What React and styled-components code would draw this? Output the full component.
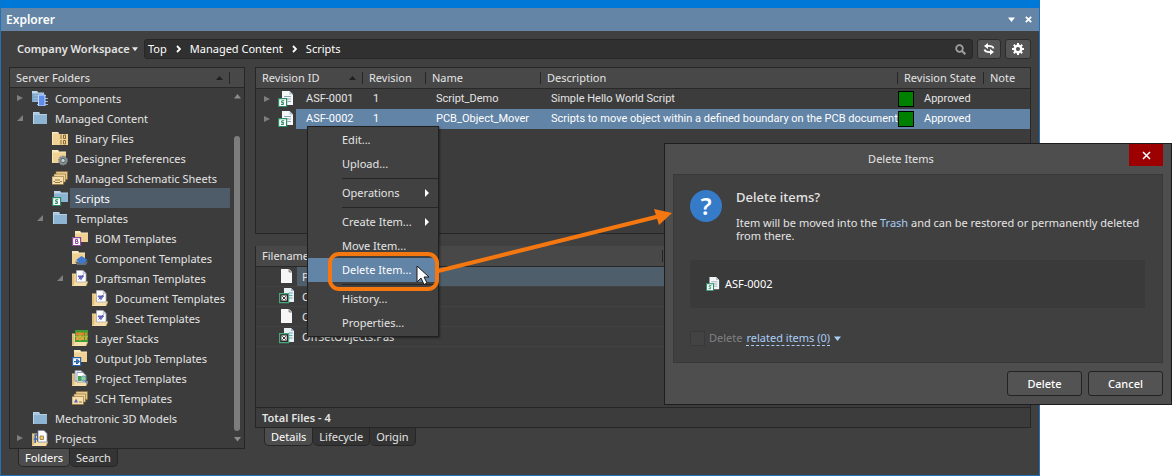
import React, { useState } from "react";
import styled, { createGlobalStyle, css } from "styled-components";

const GlobalStyle = createGlobalStyle`
	* {
		box-sizing: border-box;
	}
	body {
		margin: 0;
		background-color: #ffffff;
		font-family: "Noto Sans", "Open Sans", sans-serif;
		font-size: 11px;
		line-height: 20px;
		color: #e4e4e4;
	}
	button,
	input,
	select {
		font: inherit;
		color: inherit;
		margin: 0;
		padding: 0;
		border: 0;
		background: none;
	}
	a {
		color: inherit;
		text-decoration: none;
	}
	svg {
		display: block;
		flex: none;
	}
`;

const Page = styled.div`
	position: relative;
`;

const Window = styled.main`
	margin-right: 132px;
	border: 1px solid #2172b8;
	border-top: 8px solid #0078d7;
	background-color: #404040;
`;

const TitleBar = styled.header`
	display: flex;
	align-items: center;
	gap: 8px;
	height: 23px;
	padding: 0 6px 0 5px;
	background-color: #6485a5;
	color: #ffffff;
	h1 {
		flex: 1;
		margin: 0;
		font-size: 12px;
		font-weight: 600;
	}
`;

const TitleButton = styled.button`
	display: flex;
	align-items: center;
	justify-content: center;
	width: 9px;
	height: 16px;
`;

const Toolbar = styled.div`
	display: flex;
	align-items: center;
	gap: 4px;
	padding: 8px 8px 8px 16px;
`;

const Workspace = styled.label`
	display: flex;
	align-items: center;
	gap: 2px;
	margin-right: 2px;
	select {
		appearance: none;
		font-weight: 600;
	}
`;

const AddressBar = styled.div`
	display: flex;
	flex: 1;
	align-items: center;
	height: 20px;
	padding: 0 6px 0 3px;
	border: 1px solid #272727;
	border-radius: 3px;
	background-color: #303030;
	color: #ffffff;
	input {
		flex: 1;
		min-width: 0;
		height: 16px;
		outline: none;
	}
`;

const Crumb = styled.a`
	display: flex;
	align-items: center;
	gap: 9px;
	margin-right: 9px;
	white-space: nowrap;
`;

const ToolButton = styled.button`
	display: flex;
	align-items: center;
	justify-content: center;
	width: ${(props) => props.$width}px;
	height: 20px;
	border: 1px solid #2c2c2c;
	border-radius: 3px;
	background-color: #555555;
`;

const Body = styled.div`
	display: flex;
	gap: 10px;
	padding: 0 8px 8px;
`;

const Sidebar = styled.section`
	flex: none;
	width: 236px;
`;

const Content = styled.section`
	flex: 1;
	min-width: 0;
`;

const Panel = styled.div`
	border: 1px solid #262626;
	border-top-width: ${(props) => (props.$openTop ? 0 : 1)}px;
	background-color: #3c3c3c;
	min-height: ${(props) => props.$minHeight || 0}px;
	margin-bottom: ${(props) => props.$gap || 0}px;
`;

const SidebarHeader = styled.div`
	display: flex;
	align-items: center;
	height: 20px;
	padding: 0 14px 0 6px;
	border-bottom: 1px solid #282828;
	background-color: #484848;
	h2 {
		flex: 1;
		margin: 0;
		font-size: 11px;
		font-weight: 400;
	}
`;

const Divider = styled.span`
	width: 1px;
	height: 12px;
	margin-left: 6px;
	background-color: #262626;
`;

const TreeArea = styled.div`
	display: flex;
`;

const Tree = styled.ul`
	flex: 1;
	margin: 0;
	padding: 0;
	list-style: none;
`;

const TreeRow = styled.li`
	display: flex;
	align-items: center;
	height: 20px;
	padding-left: ${(props) => props.$level * 20 + 6}px;
`;

const TreeToggle = styled.span`
	flex: none;
	width: 16px;
`;

const TreeLabel = styled.button`
	flex: 1;
	height: 20px;
	margin-left: 2px;
	padding: 2px 0 0 5px;
	line-height: 18px;
	text-align: left;
	white-space: nowrap;
	background-color: ${(props) => (props.$selected ? "#4e5c6a" : "transparent")};
	color: ${(props) => (props.$selected ? "#ffffff" : "inherit")};
`;

const ScrollBar = styled.div`
	display: flex;
	flex-direction: column;
	align-items: center;
	gap: 1px;
	width: 14px;
	padding: 6px 0;
`;

const ScrollTrack = styled.div`
	display: flex;
	flex: 1;
	width: 6px;
	padding: 36px 0 5px;
`;

const ScrollThumb = styled.div`
	flex: 1;
	border-radius: 3px;
	background-color: #7d7d7d;
`;

const Tabs = styled.div`
	display: flex;
	padding-left: 9px;
`;

const Tab = styled.button`
	height: 18px;
	padding: 0 6px;
	border: 1px solid #262626;
	border-top: 0;
	border-left-width: ${(props) => (props.$active ? 1 : 0)}px;
	border-radius: 0 0 5px 5px;
	line-height: 16px;
	background-color: ${(props) => (props.$active ? "#4d4d4d" : "#343434")};
	color: ${(props) => (props.$active ? "#ffffff" : "#e4e4e4")};
`;

const Table = styled.table`
	width: 100%;
	table-layout: fixed;
	border-collapse: collapse;
	th,
	td {
		padding: 0;
		text-align: left;
		font-weight: 400;
		white-space: nowrap;
	}
`;

const HeadCell = styled.th`
	height: 20px;
	border-bottom: 1px solid #282828;
	background-color: #484848;
	div {
		display: flex;
		align-items: center;
		height: 19px;
		padding-left: 6px;
	}
	span:first-child {
		flex: 1;
	}
`;

const rowText = css`
	height: 20px;
	font-family: "Roboto", "Liberation Sans", sans-serif;
	font-size: 11px;
`;

const RevisionRow = styled.tr`
	${rowText}
	color: ${(props) => (props.$selected ? "#ffffff" : "inherit")};
	td:not(:first-child),
	td:first-child span {
		background-color: ${(props) => (props.$selected ? "#6284a6" : "transparent")};
	}
	td:not(:first-child) {
		padding-left: 10px;
	}
	td:nth-child(5) {
		padding-left: 0;
	}
`;

const IdCell = styled.div`
	display: flex;
	align-items: center;
	height: 20px;
	padding-left: 7px;
	svg:nth-child(2) {
		margin: 0 2px 0 7px;
	}
	span {
		flex: 1;
		height: 20px;
		padding-left: 10px;
	}
`;

const State = styled.div`
	display: flex;
	align-items: center;
	gap: 10px;
	&::before {
		content: "";
		width: 14px;
		height: 14px;
		border: 1px solid #000000;
		background-color: #008000;
	}
`;

const FileRow = styled.tr`
	border-bottom: 1px solid #424242;
	td {
		height: 20px;
	}
`;

const FileCell = styled.div`
	display: flex;
	align-items: center;
	height: 19px;
	padding-left: 23px;
	gap: 2px;
	span {
		flex: 1;
		height: 19px;
		padding-left: 5px;
		line-height: 19px;
		background-color: ${(props) => (props.$selected ? "#4f5e6b" : "transparent")};
	}
`;

const FileRest = styled.td`
	background-color: ${(props) => (props.$selected ? "#4f5e6b" : "transparent")};
`;

const FilesBody = styled.div`
	min-height: 161px;
`;

const Total = styled.footer`
	height: 20px;
	padding-left: 6px;
	border-top: 1px solid #262626;
	line-height: 20px;
	font-weight: 600;
`;

const Menu = styled.div`
	position: absolute;
	left: 307px;
	top: 126px;
	width: 132px;
	padding: 1px 0;
	border: 1px solid #202020;
	background-color: #414141;
	box-shadow: 1px 1px 2px rgba(0, 0, 0, 0.4);
	hr {
		height: 1px;
		margin: 2px 0 2px 34px;
		border: 0;
		background-color: #262626;
	}
`;

const MenuItem = styled.button`
	display: flex;
	align-items: center;
	justify-content: space-between;
	width: 100%;
	height: 24px;
	padding: 0 9px 0 34px;
	background-color: ${(props) => (props.$active ? "#6284a6" : "transparent")};
	color: ${(props) => (props.$active ? "#ffffff" : "inherit")};
`;

const Callout = styled.svg`
	position: absolute;
	left: 320px;
	top: 200px;
	pointer-events: none;
`;

const Dialog = styled.div`
	position: absolute;
	left: 664px;
	right: 0;
	top: 143px;
	padding: 0 8px 8px;
	border: 1px solid #1e1e1e;
	background-color: #4e4e4e;
`;

const DialogTitle = styled.header`
	display: flex;
	height: 30px;
	h2 {
		flex: 1;
		margin: 0;
		text-align: center;
		font-size: 11px;
		font-weight: 400;
		line-height: 30px;
	}
`;

const CloseButton = styled.button`
	display: flex;
	align-items: center;
	justify-content: center;
	width: 34px;
	height: 22px;
	background-color: #9c0000;
`;

const DialogBody = styled.div`
	padding: 12px 17px 14px 16px;
	border: 1px solid #383838;
	background-color: #404040;
`;

const Message = styled.div`
	display: flex;
	gap: 14px;
	padding-bottom: 18px;
	h3 {
		margin: 0 0 9px;
		font-size: 13px;
		font-weight: 500;
		line-height: 20px;
	}
	p {
		margin: 0;
		line-height: 13px;
	}
	a {
		color: #a9cdf5;
	}
`;

const QuestionBadge = styled.span`
	display: flex;
	flex: none;
	align-items: center;
	justify-content: center;
	width: 32px;
	height: 32px;
	margin-top: 3px;
	border-radius: 50%;
	background-color: #357bc8;
	font-size: 24px;
	font-weight: 600;
	color: #ffffff;
`;

const ItemBox = styled.div`
	display: flex;
	align-items: center;
	gap: 5px;
	height: 48px;
	padding-left: 16px;
	background-color: #3a3a3a;
	color: #ffffff;
`;

const Related = styled.div`
	display: flex;
	align-items: center;
	gap: 4px;
	margin-top: 20px;
	color: #808080;
	input {
		appearance: none;
		width: 15px;
		height: 15px;
		border: 1px solid #393939;
		background-color: #434343;
	}
	a {
		border-bottom: 1px dashed #a9cdf5;
		line-height: 15px;
		color: #a9cdf5;
	}
`;

const DialogActions = styled.div`
	display: flex;
	justify-content: flex-end;
	gap: 6px;
	padding-top: 8px;
`;

const ActionButton = styled.button`
	width: 75px;
	height: 25px;
	border: 1px solid #222222;
	border-radius: 3px;
	background-color: #535353;
	font-weight: 500;
	color: #ffffff;
`;

/**
 * Small glyphs
 */
const Caret = ({ size = 7, color = "#e4e4e4" }) => (
    <svg width={size} height={size} viewBox="0 0 7 7">
        <path d="M0 1.500h7L3.500 6z" fill={color} />
    </svg>
);

const ScrollArrow = ({ up }) => (
    <svg width="7" height="5" viewBox="0 0 7 5">
        <path d={up ? "M0 4.500h7L3.500 0z" : "M0 0h7L3.500 4.500z"} fill="#8c8c8c" />
    </svg>
);

const SortArrow = () => (
    <svg width="7" height="4" viewBox="0 0 7 4">
        <path d="M0 4h7L3.500 0z" fill="#202020" />
    </svg>
);

const Collapsed = () => (
    <svg width="8" height="8" viewBox="0 0 8 8">
        <path d="M1 1v6l6-3z" fill="#7e7e7e" />
    </svg>
);

const Expanded = () => (
    <svg width="8" height="8" viewBox="0 0 8 8">
        <path d="M7 1v6H1z" fill="#7e7e7e" />
    </svg>
);

const Chevron = () => (
    <svg width="5" height="8" viewBox="0 0 5 8">
        <path d="M1 1l3 3-3 3" fill="none" stroke="#ffffff" strokeWidth="1.800" />
    </svg>
);

/**
 * Folder artwork
 */
const YELLOW = "#f0d294";
const BLUE = "#8db5d3";

const FolderShape = ({ fill, tab }) => (
    <>
        <path d="M1 2h6l1 2h7v10H1z" fill={fill} />
        <path d="M1 2h6l1 1.500H2V14H1z" fill={tab} />
        <path d="M2 4.500h13" stroke={tab} strokeWidth=".8" />
    </>
);

const OpenFolder = () => (
    <>
        <path d="M0 3.500h5V12l-3 4H0z" fill="#f0d294" />
        <path d="M1 15V4.500" stroke="#c79f58" strokeWidth=".8" />
        <path d="M1 16l3-4.500h12L14 16z" fill="#f6dfaa" />
        <path d="M14 16l2-4.500" stroke="#c79f58" strokeWidth=".8" />
    </>
);

const Stack = () => (
    <>
        <path d="M4 1.500h11.500v8H4z" fill="#e7c98a" stroke="#8a6a35" strokeWidth=".6" />
        <path d="M2 4h11.500v8H2z" fill="#efd298" stroke="#8a6a35" strokeWidth=".6" />
        <path d="M0 6.500h11.500v8H0z" fill="#f6dfaa" stroke="#8a6a35" strokeWidth=".6" />
    </>
);

const Badge = ({ color, children }) => (
    <>
        <path d="M.6 7.600h8v8h-8z" fill="#ffffff" stroke={color} strokeWidth="1.200" />
        {children}
    </>
);

const S_PATH = "M6.200 9.800H4L3.500 11l2 .9L5.200 13.400H3";

const ICONS = {
    folder: <FolderShape fill={BLUE} tab="#bcd6e8" />,
    components: (
        <>
            <path d="M0 1h5l1 2h6v9H0z" fill="#7fa9cc" />
            <path d="M0 1h5l1 1.500h6v1H0z" fill="#c0d8ea" />
            <path d="M2 5h12v1H2zM2 8h14v1H2zM2 11h14v1H2zM5 14h11v1H5z" fill="#9bb5dc" />
            <path d="M6.500 5h6.500v11H6.500z" fill="#5f8eea" stroke="#c6d8ff" strokeWidth="1" />
        </>
    ),
    binary: (
        <>
            <path d="M0 2h6l1 2h9v11H0z" fill={YELLOW} />
            <path d="M0 2h6l1 1.500H1V15H0z" fill="#fae9bd" />
            <path
                d="M9 4.500V9M9 10v4.500M11.500 5h2v3.500h-2zM11.500 10.500h2V14h-2z"
                fill="none"
                stroke="#8a6a35"
                strokeWidth="1"
            />
        </>
    ),
    preferences: (
        <>
            <path d="M0 0h6l1 2h7v11H0z" fill={YELLOW} />
            <path d="M0 0h6l1 1.500h7v1H1V13H0z" fill="#fae9bd" />
            <circle cx="11" cy="10.500" r="4.200" fill="#8c9698" stroke="#7b888b" strokeDasharray="1.600 1" strokeWidth="1.500" />
            <circle cx="11" cy="10.500" r="2.200" fill="#c3cdcf" stroke="#4b5a5d" strokeWidth=".9" />
        </>
    ),
    sheets: (
        <>
            <Stack />
            <path d="M3 10h5M3 12.500h5M1.500 11.500h1.500M8 11.500h2" stroke="#8a6a35" strokeWidth=".9" />
        </>
    ),
    scriptFolder: (
        <>
            <path d="M2 1h6l1 2h7v9H2z" fill={BLUE} />
            <path d="M2 1h6l1 1.500h7v1H2z" fill="#bcd6e8" />
            <Badge color="#2c8c66">
                <path d={S_PATH} fill="none" stroke="#2c8c66" strokeWidth="1.100" />
            </Badge>
        </>
    ),
    bom: (
        <>
            <path d="M3 1h5l1 2h7v9H3z" fill={YELLOW} />
            <path d="M3 1h5l1 1.500h7v1H3z" fill="#fae9bd" />
            <Badge color="#8f479c">
                <path d="M3.500 9.500h2v1.800h-2zM3.500 11.500h2.500v2h-2.500z" fill="none" stroke="#8f479c" strokeWidth="1" />
            </Badge>
        </>
    ),
    componentFolder: (
        <>
            <path d="M0 1h6l1 2h6v11H0z" fill={YELLOW} />
            <path d="M0 1h6l1 1.500h6v1H0z" fill="#fae9bd" />
            <path d="M3 11.500h13l-2 3.500H5z" fill="#606e7c" />
            <path d="M4 10l5.500-4 6 4-5.500 4z" fill="#3f78cf" />
        </>
    ),
    draftsman: (
        <>
            <OpenFolder />
            <path d="M4.500 .5h6.500l3 3V12H4.500z" fill="#ffffff" stroke="#a9a9bd" strokeWidth=".8" />
            <path d="M11 .5v3h3" fill="#dcdcea" stroke="#a9a9bd" strokeWidth=".6" />
            <path d="M5.500 6h6.500l-3 4.500z" fill="#7474c4" />
            <path d="M6 6h6M6.500 9.500l5-5" stroke="#5050a8" strokeWidth=".9" />
        </>
    ),
    layers: (
        <>
            <OpenFolder />
            <path d="M3 0h13v12H3z" fill="#3f9c35" />
            <path d="M4 2.500h3.500v3H4zM8.500 2.500H12v3H8.500zM13 2.500h2v3h-2z" fill="#ef7d2c" />
            <path d="M4 7h3.500v3H4zM8.500 7H12v3H8.500zM13 7h2v3h-2z" fill="#e8a03a" />
            <path d="M3 6.300h13M8 2v9" stroke="#e8d24a" strokeWidth=".7" />
        </>
    ),
    output: (
        <>
            <path d="M2 0h6l1 2h6v10H2z" fill={YELLOW} />
            <path d="M2 0h6l1 1.500h6v1H2z" fill="#fae9bd" />
            <Badge color="#2b63ad">
                <path d="M2 11.600h5M4.600 9.300v4.600M5.200 9.500l2 2.100-2 2.100" fill="none" stroke="#2b63ad" strokeWidth="1.200" />
            </Badge>
        </>
    ),
    project: (
        <>
            <OpenFolder />
            <path d="M3 .5h6l2 2V11H3z" fill="#e9edf5" stroke="#8189a8" strokeWidth=".8" />
            <path d="M5 2.500h6l3 3V12H5z" fill="#ffffff" stroke="#8189a8" strokeWidth=".8" />
            <path d="M6 6h3v5H6z" fill="#3fa34c" />
            <circle cx="11.500" cy="8.500" r="2.600" fill="#8fd0a0" stroke="#4c8d9d" strokeWidth=".9" />
            <path d="M13 10.500l2.500 3" stroke="#5a82b8" strokeWidth="1.500" />
        </>
    ),
    sch: (
        <>
            <Stack />
            <path d="M2 12.500l2-4 2 4z" fill="#5a62b8" />
            <path d="M7 12h3" stroke="#8a6a35" strokeWidth=".9" />
        </>
    ),
    projects: (
        <>
            <OpenFolder />
            <path d="M6 .5h6l3 3V12H6z" fill="#ffffff" stroke="#8189a8" strokeWidth=".8" />
            <path d="M8 6h3.500v3.500H8z" fill="#eccb6c" stroke="#96743a" strokeWidth=".8" />
            <path d="M5.500 5H3.200v8M1.800 9h4" fill="none" stroke="#3a69b5" strokeWidth="1.500" />
        </>
    ),
    script: (
        <>
            <path d="M4 0h7.500L15 3.500V14H4z" fill="#f4f7f7" />
            <path d="M11.500 0v3.500H15" fill="#b7c4cc" />
            <path d="M6 5.500h7M8 8h5M9.500 10.500h3.500" stroke="#8ea7b5" strokeWidth="1" />
            <Badge color="#2c8c66">
                <path d={S_PATH} fill="none" stroke="#2c8c66" strokeWidth="1.100" />
            </Badge>
        </>
    ),
    page: (
        <>
            <path d="M2 1h8l3 3v11H2z" fill="#f6f6f6" />
            <path d="M10 1v3h3" fill="#cccccc" stroke="#707070" strokeWidth=".8" />
        </>
    ),
    form: (
        <>
            <path d="M5 0h7l3 3v11H5z" fill="#e6f0f3" />
            <path d="M12 0v3h3" fill="#a4b8c2" />
            <path d="M10 5h3.500M10 7.500h3.500M10 10h3.500" stroke="#74a3b8" strokeWidth="1" />
            <path d="M.6 5.600h9v9h-9z" fill="#2b2b2b" stroke="#4aa67c" strokeWidth="1.200" />
            <path d="M2.500 7.500h5.200v5H2.500z" fill="#ffffff" />
            <path d="M3.300 8.300l3.600 3.400M6.900 8.300l-3.600 3.400" stroke="#2b2b2b" strokeWidth="1" />
        </>
    ),
};

const Icon = ({ name, size = 16 }) => (
    <svg width={size} height={size} viewBox="0 0 16 16">
        {ICONS[name]}
    </svg>
);

/**
 * Data
 */
const folders = [
    { label: "Components", icon: "components", level: 0, toggle: "closed" },
    { label: "Managed Content", icon: "folder", level: 0, toggle: "open" },
    { label: "Binary Files", icon: "binary", level: 1 },
    { label: "Designer Preferences", icon: "preferences", level: 1 },
    { label: "Managed Schematic Sheets", icon: "sheets", level: 1 },
    { label: "Scripts", icon: "scriptFolder", level: 1 },
    { label: "Templates", icon: "folder", level: 1, toggle: "open" },
    { label: "BOM Templates", icon: "bom", level: 2 },
    { label: "Component Templates", icon: "componentFolder", level: 2 },
    { label: "Draftsman Templates", icon: "draftsman", level: 2, toggle: "open" },
    { label: "Document Templates", icon: "draftsman", level: 3 },
    { label: "Sheet Templates", icon: "draftsman", level: 3 },
    { label: "Layer Stacks", icon: "layers", level: 2 },
    { label: "Output Job Templates", icon: "output", level: 2 },
    { label: "Project Templates", icon: "project", level: 2 },
    { label: "SCH Templates", icon: "sch", level: 2 },
    { label: "Mechatronic 3D Models", icon: "folder", level: 0 },
    { label: "Projects", icon: "projects", level: 0, toggle: "closed" },
];

const columns = [
    { label: "Revision ID", width: 107, sorted: true },
    { label: "Revision", width: 63 },
    { label: "Name", width: 115 },
    { label: "Description" },
    { label: "Revision State", width: 86 },
    { label: "Note", width: 46, last: true },
];

const revisions = [
    {
        id: "ASF-0001",
        revision: "1",
        name: "Script_Demo",
        description: "Simple Hello World Script",
        state: "Approved",
    },
    {
        id: "ASF-0002",
        revision: "1",
        name: "PCB_Object_Mover",
        description: "Scripts to move object within a defined boundary on the PCB document",
        state: "Approved",
        selected: true,
    },
];

const files = [
    { name: "PCB_Object.PrjScr", icon: "page", selected: true },
    { name: "OffSetForm.Pas", icon: "form" },
    { name: "OffSetForm.dfm", icon: "page" },
    { name: "OffSetObjects.Pas", icon: "form" },
];

const menuItems = [
    { label: "Edit..." },
    { label: "Upload..." },
    null,
    { label: "Operations", submenu: true },
    null,
    { label: "Create Item...", submenu: true },
    { label: "Move Item..." },
    { label: "Delete Item...", active: true },
    null,
    { label: "History..." },
    { label: "Properties..." },
];

function FolderTree() {
    const [selected, setSelected] = useState("Scripts");
    return (
        <Sidebar>
            <Panel>
                <SidebarHeader>
                    <h2>Server Folders</h2>
                    <SortArrow />
                    <Divider />
                </SidebarHeader>
                <TreeArea>
                    <Tree>
                        {folders.map(({ label, icon, level, toggle }) => (
                            <TreeRow key={label} $level={level}>
                                <TreeToggle>
                                    {toggle === "closed" && <Collapsed />}
                                    {toggle === "open" && <Expanded />}
                                </TreeToggle>
                                <Icon name={icon} />
                                <TreeLabel $selected={selected === label} onClick={() => setSelected(label)}>
                                    {label}
                                </TreeLabel>
                            </TreeRow>
                        ))}
                    </Tree>
                    <ScrollBar>
                        <ScrollArrow up />
                        <ScrollTrack>
                            <ScrollThumb />
                        </ScrollTrack>
                        <ScrollArrow />
                    </ScrollBar>
                </TreeArea>
            </Panel>
            <Tabs>
                <Tab $active>Folders</Tab>
                <Tab>Search</Tab>
            </Tabs>
        </Sidebar>
    );
}

function RevisionTable() {
    return (
        <Panel $minHeight={167} $gap={12}>
            <Table>
                <colgroup>
                    {columns.map((col) => (
                        <col key={col.label} width={col.width} />
                    ))}
                </colgroup>
                <thead>
                    <tr>
                        {columns.map((col) => (
                            <HeadCell key={col.label}>
                                <div>
                                    <span>{col.label}</span>
                                    {col.sorted && <SortArrow />}
                                    {!col.last && <Divider />}
                                </div>
                            </HeadCell>
                        ))}
                    </tr>
                </thead>
                <tbody>
                    {revisions.map((row) => (
                        <RevisionRow key={row.id} $selected={row.selected}>
                            <td>
                                <IdCell>
                                    <Collapsed />
                                    <Icon name="script" />
                                    <span>{row.id}</span>
                                </IdCell>
                            </td>
                            <td>{row.revision}</td>
                            <td>{row.name}</td>
                            <td>{row.description}</td>
                            <td>
                                <State>{row.state}</State>
                            </td>
                            <td />
                        </RevisionRow>
                    ))}
                </tbody>
            </Table>
        </Panel>
    );
}

function FilesPanel() {
    return (
        <>
            <Panel $openTop>
                <FilesBody>
                    <Table>
                        <colgroup>
                            <col width="407" />
                            <col />
                        </colgroup>
                        <thead>
                            <tr>
                                <HeadCell>
                                    <div>
                                        <span>Filename</span>
                                        <Divider />
                                    </div>
                                </HeadCell>
                                <HeadCell />
                            </tr>
                        </thead>
                        <tbody>
                            {files.map((file) => (
                                <FileRow key={file.name}>
                                    <td>
                                        <FileCell $selected={file.selected}>
                                            <Icon name={file.icon} />
                                            <span>{file.name}</span>
                                        </FileCell>
                                    </td>
                                    <FileRest $selected={file.selected} />
                                </FileRow>
                            ))}
                        </tbody>
                    </Table>
                </FilesBody>
                <Total>Total Files - 4</Total>
            </Panel>
            <Tabs>
                <Tab $active>Details</Tab>
                <Tab>Lifecycle</Tab>
                <Tab>Origin</Tab>
            </Tabs>
        </>
    );
}

function ContextMenu() {
    return (
        <Menu role="menu">
            {menuItems.map((item, index) =>
                item ? (
                    <MenuItem key={item.label} role="menuitem" $active={item.active}>
                        {item.label}
                        {item.submenu && (
                            <svg width="4" height="8" viewBox="0 0 4 8">
                                <path d="M0 0v8l4-4z" fill="#ffffff" />
                            </svg>
                        )}
                    </MenuItem>
                ) : (
                    <hr key={index} />
                )
            )}
        </Menu>
    );
}

function DeleteDialog() {
    return (
        <Dialog role="dialog" aria-labelledby="dialog-title">
            <DialogTitle>
                <h2 id="dialog-title">Delete Items</h2>
                <CloseButton aria-label="Close">
                    <svg width="9" height="9" viewBox="0 0 9 9">
                        <path d="M1 1l7 7M8 1L1 8" stroke="#ffffff" strokeWidth="1.500" />
                    </svg>
                </CloseButton>
            </DialogTitle>
            <DialogBody>
                <Message>
                    <QuestionBadge>?</QuestionBadge>
                    <div>
                        <h3>Delete items?</h3>
                        <p>
                            Item will be moved into the <a href="#trash">Trash</a> and can be restored or
                            permanently deleted from there.
                        </p>
                    </div>
                </Message>
                <ItemBox>
                    <Icon name="script" size={14} />
                    ASF-0002
                </ItemBox>
                <Related>
                    <input type="checkbox" id="related" disabled />
                    <label htmlFor="related">Delete</label>
                    <a href="#related">related items (0)</a>
                    <Caret color="#a9cdf5" />
                </Related>
            </DialogBody>
            <DialogActions>
                <ActionButton>Delete</ActionButton>
                <ActionButton>Cancel</ActionButton>
            </DialogActions>
        </Dialog>
    );
}

export default function App() {
    return (
        <Page>
            <GlobalStyle />
            <Window>
                <TitleBar>
                    <h1>Explorer</h1>
                    <TitleButton aria-label="Window menu">
                        <Caret color="#ffffff" />
                    </TitleButton>
                    <TitleButton aria-label="Close window">
                        <svg width="7" height="7" viewBox="0 0 7 7">
                            <path d="M.8 .8l5.400 5.400M6.200 .8L.8 6.200" stroke="#ffffff" strokeWidth="1.800" />
                        </svg>
                    </TitleButton>
                </TitleBar>
                <Toolbar>
                    <Workspace>
                        <select aria-label="Workspace">
                            <option>Company Workspace</option>
                        </select>
                        <Caret size={6} />
                    </Workspace>
                    <AddressBar>
                        <Crumb href="#top">
                            Top <Chevron />
                        </Crumb>
                        <Crumb href="#managed">
                            Managed Content <Chevron />
                        </Crumb>
                        <Crumb href="#scripts">Scripts</Crumb>
                        <input type="text" aria-label="Search" />
                        <svg width="11" height="11" viewBox="0 0 11 11" fill="none" stroke="#a0a0a0">
                            <circle cx="4.500" cy="4.500" r="3.300" strokeWidth="1.800" />
                            <path d="M7 7l3.300 3.300" strokeWidth="2" />
                        </svg>
                    </AddressBar>
                    <ToolButton $width={24} aria-label="Refresh">
                        <svg width="12" height="12" viewBox="0 0 12 12">
                            <path
                                d="M10.500 5.500C10 3.500 7.500 2.800 4 3M1.500 6.500C2 8.500 4.500 9.200 8 9"
                                fill="none"
                                stroke="#ffffff"
                                strokeWidth="1.800"
                            />
                            <path d="M5 0v6L1 3zM7 6v6l4-3z" fill="#ffffff" />
                        </svg>
                    </ToolButton>
                    <ToolButton $width={26} aria-label="Settings">
                        <svg width="12" height="12" viewBox="0 0 12 12" fill="none" stroke="#ffffff">
                            <circle cx="6" cy="6" r="3.300" strokeWidth="2.400" />
                            <path
                                d="M6 0v2M6 10v2M0 6h2M10 6h2M1.800 1.800l1.400 1.400M8.800 8.800l1.400 1.400M10.200 1.800L8.800 3.200M3.200 8.800l-1.400 1.400"
                                strokeWidth="2"
                            />
                        </svg>
                    </ToolButton>
                </Toolbar>
                <Body>
                    <FolderTree />
                    <Content>
                        <RevisionTable />
                        <FilesPanel />
                    </Content>
                </Body>
            </Window>
            <ContextMenu />
            <DeleteDialog />
            <Callout width="360" height="100" viewBox="0 0 360 100">
                <rect x="10" y="54" width="107" height="35" rx="9" fill="none" stroke="#f57710" strokeWidth="4" />
                <path d="M118 71L338 16.500" stroke="#f57710" strokeWidth="4" />
                <path d="M352 13L334 9l5 16z" fill="#f57710" />
                <path
                    d="M97 66v16l4-4 3 6.500 3-1.500-3-6h5z"
                    fill="#ffffff"
                    stroke="#1a1a1a"
                    strokeWidth="1"
                />
            </Callout>
        </Page>
    );
}
